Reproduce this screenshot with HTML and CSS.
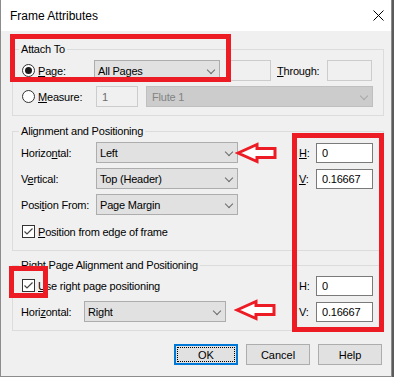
FILE: index.html
```html
<!DOCTYPE html>
<html lang="en">
  <head>
    <meta charset="UTF-8" />
    <title>Frame Attributes</title>
    <link rel="stylesheet" href="styles.css">
  </head>
  <body>
    <div class="dialog">
      <div class="titlebar">
        <span class="title">Frame Attributes</span>
        <svg class="close" width="11" height="11" viewBox="0 0 11 11">
          <path d="M0.5 0.5 L10.5 10.5 M10.5 0.5 L0.5 10.5" stroke="#000" stroke-width="1" fill="none" />
        </svg>
      </div>

      <div class="content">
        <fieldset class="group">
          <legend>Attach To</legend>
          <div class="row">
            <span class="radio checked"></span>
            <span class="lbl lbl-page"><u>P</u>age:</span>
            <div class="select sel-pages">All Pages<span class="chev"></span></div>
            <div class="field disabled fld-from"></div>
            <span class="lbl lbl-through"><u>T</u>hrough:</span>
            <div class="field disabled fld-through"></div>
          </div>
          <div class="row">
            <span class="radio"></span>
            <span class="lbl lbl-measure"><u>M</u>easure:</span>
            <div class="field disabled fld-num">1</div>
            <div class="select disabled sel-flute">Flute 1<span class="chev"></span></div>
          </div>
        </fieldset>

        <fieldset class="group group-align">
          <legend>Alignment and Positioning</legend>
          <div class="split">
            <div class="col">
              <div class="row">
                <span class="lbl lbl-wide">Horizo<u>n</u>tal:</span>
                <div class="select sel-pos">Left<span class="chev"></span></div>
              </div>
              <div class="row">
                <span class="lbl lbl-wide">V<u>e</u>rtical:</span>
                <div class="select sel-pos">Top (Header)<span class="chev"></span></div>
              </div>
              <div class="row">
                <span class="lbl lbl-wide">Posi<u>t</u>ion From:</span>
                <div class="select sel-pos">Page Margin<span class="chev"></span></div>
              </div>
              <div class="row row-check">
                <svg class="check" width="13" height="13" viewBox="0 0 13 13">
                  <rect x="0.5" y="0.5" width="12" height="12" fill="#fff" stroke="#333" />
                  <path d="M2.5 6.5 L5 9 L10.5 3.5" stroke="#444" stroke-width="1.2" fill="none" />
                </svg>
                <span class="lbl"><u>P</u>osition from edge of frame</span>
              </div>
            </div>
            <div class="col">
              <div class="row">
                <span class="lbl lbl-hv"><u>H</u>:</span>
                <div class="field num">0</div>
              </div>
              <div class="row">
                <span class="lbl lbl-hv"><u>V</u>:</span>
                <div class="field num">0.16667</div>
              </div>
            </div>
          </div>
        </fieldset>

        <fieldset class="group group-right">
          <legend>Right Page Alignment and Positioning</legend>
          <div class="split">
            <div class="col">
              <div class="row">
                <svg class="check" width="13" height="13" viewBox="0 0 13 13">
                  <rect x="0.5" y="0.5" width="12" height="12" fill="#fff" stroke="#333" />
                  <path d="M2.5 6.5 L5 9 L10.5 3.5" stroke="#444" stroke-width="1.2" fill="none" />
                </svg>
                <span class="lbl"><u>U</u>se right page positioning</span>
              </div>
              <div class="row">
                <span class="lbl lbl-short">Hori<u>z</u>ontal:</span>
                <div class="select sel-pos">Right<span class="chev"></span></div>
              </div>
            </div>
            <div class="col">
              <div class="row">
                <span class="lbl lbl-hv">H:</span>
                <div class="field num">0</div>
              </div>
              <div class="row">
                <span class="lbl lbl-hv">V:</span>
                <div class="field num">0.16667</div>
              </div>
            </div>
          </div>
        </fieldset>

        <div class="buttons">
          <button class="btn default"><span>OK</span></button>
          <button class="btn">Cancel</button>
          <button class="btn">Help</button>
        </div>
      </div>

      <!-- red annotations drawn over the dialog -->
      <div class="mark mark-attach"></div>
      <div class="mark mark-hv"></div>
      <div class="mark mark-check"></div>
      <svg class="arrow arrow-top" width="44" height="24" viewBox="0 0 44 24">
        <polygon points="3,12 22,3.5 22,7.5 40,7.5 40,16.5 22,16.5 22,20.5" fill="#fff" stroke="#ed1c24" stroke-width="3" stroke-linejoin="miter" />
      </svg>
      <svg class="arrow arrow-bottom" width="44" height="24" viewBox="0 0 44 24">
        <polygon points="3,12 22,3.5 22,7.5 40,7.5 40,16.5 22,16.5 22,20.5" fill="#fff" stroke="#ed1c24" stroke-width="3" stroke-linejoin="miter" />
      </svg>
    </div>
  </body>
</html>
```

FILE: styles.css
```css
* {
  box-sizing: border-box;
}
html,
body {
  margin: 0;
  padding: 0;
}
body {
  background: #5b5b5b;
  font-family: "Liberation Sans", Arial, sans-serif;
  font-size: 11px;
  letter-spacing: -0.2px;
  color: #000;
}
.dialog {
  position: relative;
  width: 392px;
  height: 377px;
  background: #f0f0f0;
  border: 1px solid #8c8c8c;
  border-top: 0;
}
.titlebar {
  height: 31px;
  background: #fff;
  display: flex;
  align-items: center;
  justify-content: space-between;
  padding: 0 7px 0 9px;
}
.title {
  font-size: 12px;
  letter-spacing: 0;
}
.content {
  padding: 11px 7px 0 11px;
}
.group {
  margin: 0;
  min-width: 0;
  border: 1px solid #dcdcdc;
  padding: 4px 10px 8px 8px;
}
.group legend {
  padding: 0 2px;
  margin-left: -2px;
  line-height: 14px;
}
.group-align {
  margin-top: 8px;
}
.group-right {
  margin-top: 7px;
}
.group-right legend {
  margin-bottom: -1px;
}
.row {
  display: flex;
  align-items: center;
  height: 21px;
}
.row + .row {
  margin-top: 5px;
}
.row-check {
  margin-top: 6px !important;
}
.split {
  display: flex;
  justify-content: space-between;
}
.lbl {
  white-space: nowrap;
}
.lbl-page {
  margin-left: 3px;
  width: 56px;
}
.lbl-measure {
  margin-left: 3px;
  width: 58px;
}
.lbl-through {
  margin-left: 6px;
  width: 50px;
}
.lbl-wide {
  width: 75px;
}
.lbl-short {
  width: 63px;
}
.lbl-hv {
  width: 17px;
}
.radio {
  width: 13px;
  height: 13px;
  margin-left: 1px;
  border: 1px solid #333;
  background: #fff;
  flex: none;
  border-radius: 50%;
  display: flex;
  align-items: center;
  justify-content: center;
}
.radio.checked::after {
  content: "";
  width: 7px;
  height: 7px;
  border-radius: 50%;
  background: #1a1a1a;
}
.check {
  flex: none;
  margin: 0 3px 0 1px;
}
.select {
  position: relative;
  height: 21px;
  display: flex;
  align-items: center;
  padding-left: 3px;
  background: #e1e1e1;
  border: 1px solid #adadad;
}
.select.disabled {
  background: #cccccc;
  border-color: #bfbfbf;
  color: #838383;
}
.chev {
  position: absolute;
  right: 5px;
  top: 6px;
  width: 6px;
  height: 6px;
  border: solid #6a6a6a;
  border-width: 0 1px 1px 0;
  transform: rotate(45deg);
}
.select.disabled .chev {
  border-color: #a8a8a8;
}
.sel-pages {
  width: 126px;
}
.sel-flute {
  flex: 1;
  margin-left: 8px;
  padding-left: 5px;
}
.sel-pos {
  width: 142px;
}
.field {
  height: 21px;
  display: flex;
  align-items: center;
  padding-left: 5px;
  background: #fff;
  border: 1px solid #7a7a7a;
}
.field.disabled {
  background: #f0f0f0;
  border-color: #cccccc;
  color: #6d6d6d;
}
.fld-from {
  width: 41px;
  margin-left: 10px;
}
.fld-through {
  width: 45px;
}
.fld-num {
  width: 42px;
}
.num {
  width: 57px;
  height: 20px;
}
.buttons {
  display: flex;
  justify-content: flex-end;
  gap: 8px;
  margin: 13px 2px 0 0;
}
.btn {
  width: 64px;
  height: 21px;
  margin: 0;
  padding: 0;
  font: inherit;
  color: #000;
  background: #e1e1e1;
  border: 1px solid #adadad;
}
.btn.default {
  border: 2px solid #0078d7;
  padding: 1px;
}
.btn.default span {
  display: flex;
  align-items: center;
  justify-content: center;
  height: 100%;
  border: 1px dotted #000;
}
.mark {
  position: absolute;
  border: 5px solid #ed1c24;
}
.mark-attach {
  left: 9px;
  top: 34px;
  width: 221px;
  height: 48px;
}
.mark-hv {
  left: 291px;
  top: 133px;
  width: 92px;
  height: 199px;
}
.mark-check {
  left: 8px;
  top: 266px;
  width: 39px;
  height: 32px;
}
.arrow {
  position: absolute;
}
.arrow-top {
  left: 234px;
  top: 141px;
}
.arrow-bottom {
  left: 233px;
  top: 298px;
}
```
